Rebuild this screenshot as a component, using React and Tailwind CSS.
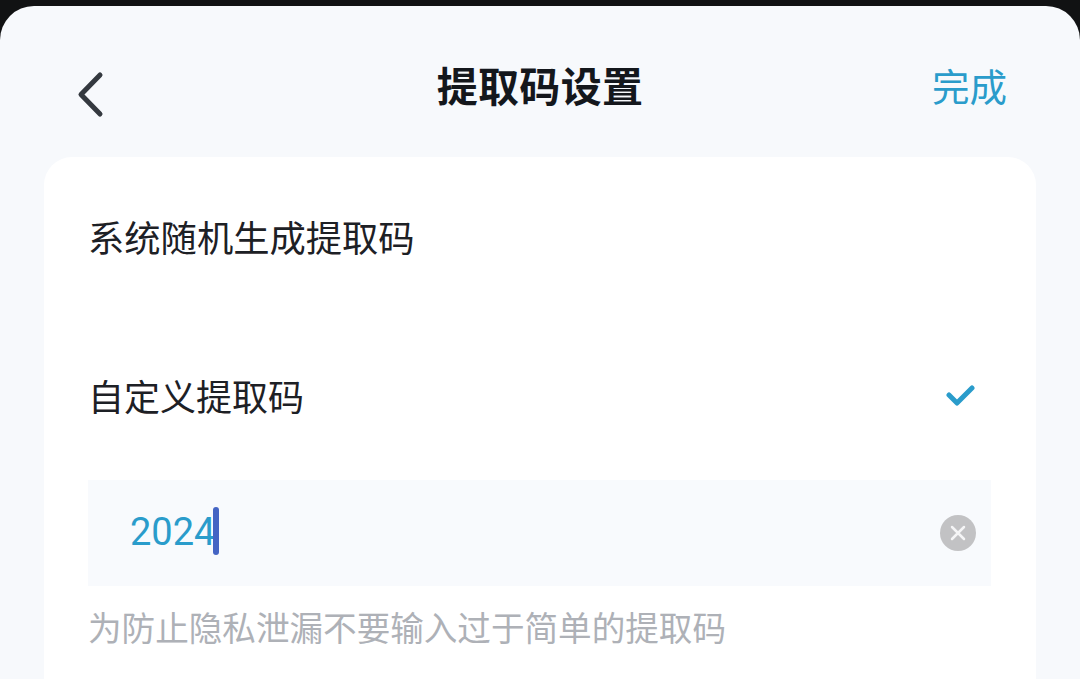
// App.jsx
// Écran de réglage du code d'extraction.

import React from 'react';

const App = () => {
  return (
    <div className="w-[1080px] h-[679px] overflow-hidden bg-[#111213] pt-[6px] font-['Noto_Sans_CJK_SC','Noto_Sans',sans-serif]">
      <div className="h-[673px] rounded-t-[34px] bg-[#f7f9fc] px-[44px]">
        {/* En-tête */}
        <div className="h-[151px] grid grid-cols-[1fr_auto_1fr] items-center">
          <svg width="30" height="50" viewBox="0 0 30 50" fill="none" className="ml-[32px] mt-[26px]">
            <path d="M24 5 L5 24.5 L24 44" stroke="#34393f" strokeWidth="5" strokeLinecap="round" strokeLinejoin="round" />
          </svg>
          <h1 className="text-[41px] leading-[50px] font-bold text-[#14171c] mt-[5px] tracking-[0.3px]">提取码设置</h1>
          <button className="justify-self-end text-[37.5px] leading-[50px] text-[#2a9ccb] mt-[6px] mr-[29px]">完成</button>
        </div>

        {/* Carte */}
        <div className="h-[522px] rounded-t-[28px] bg-white px-[44px]">
          <div className="h-[161px] flex items-center">
            <span className="text-[36.3px] leading-[44px] text-[#1d2025] mt-[-4px]">系统随机生成提取码</span>
          </div>
          <div className="h-[158px] flex items-center justify-between">
            <span className="text-[36px] leading-[44px] text-[#1d2025] mt-[-5px]">自定义提取码</span>
            <svg width="30" height="24" viewBox="0 0 30 24" fill="none" className="mr-[16px] mt-[-2px]">
              <path d="M3 11 L11 19 L26 4" stroke="#2a9ccb" strokeWidth="5" strokeLinecap="round" strokeLinejoin="round" />
            </svg>
          </div>
          <div className="h-[106px] mt-[4px] mr-[1px] bg-[#f8fafd] flex items-center justify-between pl-[42px] pr-[15px]">
            <div className="flex items-center">
              <span className="text-[38px] leading-[44px] text-[#2a9ccb] font-['Roboto',sans-serif] mt-[-2px]">2024</span>
              <span className="w-[6px] h-[48px] rounded-full bg-[#4464c4] ml-[-2px] mt-[-4px]"></span>
            </div>
            <div className="w-[36px] h-[36px] rounded-full bg-[#c2c2c4] flex items-center justify-center">
              <svg width="18" height="18" viewBox="0 0 18 18" fill="none">
                <path d="M3 3 L15 15 M15 3 L3 15" stroke="#f5f5f6" strokeWidth="2.5" strokeLinecap="round" />
              </svg>
            </div>
          </div>
          <p className="mt-[19px] text-[33.6px] leading-[44px] text-[#aeb1b7] whitespace-nowrap">为防止隐私泄漏不要输入过于简单的提取码</p>
        </div>
      </div>
    </div>
  );
};

export default App;
